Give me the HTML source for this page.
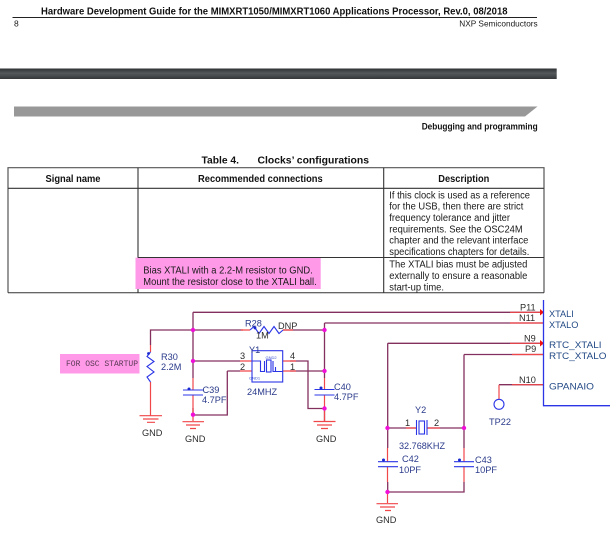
<!DOCTYPE html>
<html><head><meta charset="utf-8"><style>
html,body{margin:0;padding:0;background:#fff;width:610px;height:540px;overflow:hidden}
svg{display:block;filter:blur(.35px)}
text{font-family:"Liberation Sans",sans-serif;font-size:10px;fill:#1a1a1a}
.b{font-weight:bold;fill:#111}
.s text{font-size:9.2px;fill:#2c2c2c}
.s text.bl{fill:#2a3a8a}
.s text.nb{fill:#234a86}
.w{stroke:#84305f;stroke-width:1.3;fill:none}
.r{stroke:#f0474a;stroke-width:1.2;fill:none}
.c{stroke:#2b35e6;stroke-width:1.1;fill:none}
.d{fill:#f010d8}
.k{fill:#1a2ad0}
</style></head><body>
<svg width="610" height="540" viewBox="0 0 610 540" xmlns="http://www.w3.org/2000/svg">
<defs><linearGradient id="g" x1="0" y1="0" x2="0" y2="1"><stop offset="0" stop-color="#2e3234"/><stop offset=".45" stop-color="#54585a"/><stop offset="1" stop-color="#34383a"/></linearGradient></defs>
<rect width="610" height="540" fill="#fff"/>
<text x="41" y="14.5" class="b" textLength="466.5" lengthAdjust="spacingAndGlyphs">Hardware Development Guide for the MIMXRT1050/MIMXRT1060 Applications Processor, Rev.0, 08/2018</text>
<rect x="12.5" y="17" width="524.5" height="1" fill="#222"/>
<text x="14" y="26.5" style="font-size:8.5px">8</text>
<text x="459.3" y="26.5" style="font-size:8.5px" textLength="78.4" lengthAdjust="spacingAndGlyphs">NXP Semiconductors</text>
<rect x="0" y="68.5" width="556.7" height="10.5" fill="url(#g)"/>
<polygon points="14,106.5 537.5,106.5 525,116.5 14,116.5" fill="#989898"/>
<text x="421.7" y="129.5" class="b" style="font-size:9px" textLength="116" lengthAdjust="spacingAndGlyphs">Debugging and programming</text>

<text x="201.5" y="163.5" class="b" style="font-size:10.5px" textLength="37.5" lengthAdjust="spacingAndGlyphs">Table 4.</text>
<text x="257.5" y="163.5" class="b" style="font-size:10.5px" textLength="111.5" lengthAdjust="spacingAndGlyphs">Clocks’ configurations</text>

<g stroke="#333" fill="none" stroke-width="1">
<path d="M8 292.7V167.7H544V292.7" stroke="#555" stroke-width="1.2"/>
<path d="M8 188.3H544M138 167.7V293M383.7 167.7V293" stroke-width="1.1"/>
</g>
<rect x="135.5" y="257.7" width="185.2" height="31.3" fill="#ff99e8"/>
<g stroke="#333" fill="none" stroke-width="1">
<path d="M138 257.5H544M8 292.7H544" />
</g>
<text x="45.5" y="182" class="b" textLength="55" lengthAdjust="spacingAndGlyphs">Signal name</text>
<text x="198" y="182" class="b" textLength="124.7" lengthAdjust="spacingAndGlyphs">Recommended connections</text>
<text x="438.3" y="182" class="b" textLength="51" lengthAdjust="spacingAndGlyphs">Description</text>
<text x="389.3" y="198.3" textLength="140.7" lengthAdjust="spacingAndGlyphs">If this clock is used as a reference</text>
<text x="389.3" y="209.7" textLength="134" lengthAdjust="spacingAndGlyphs">for the USB, then there are strict</text>
<text x="389.3" y="221" textLength="120.7" lengthAdjust="spacingAndGlyphs">frequency tolerance and jitter</text>
<text x="389.3" y="232.4" textLength="133.4" lengthAdjust="spacingAndGlyphs">requirements. See the OSC24M</text>
<text x="389.3" y="243.7" textLength="139" lengthAdjust="spacingAndGlyphs">chapter and the relevant interface</text>
<text x="389.3" y="255" textLength="140" lengthAdjust="spacingAndGlyphs">specifications chapters for details.</text>
<text x="389.3" y="267.5" textLength="138" lengthAdjust="spacingAndGlyphs">The XTALI bias must be adjusted</text>
<text x="389.3" y="279" textLength="138" lengthAdjust="spacingAndGlyphs">externally to ensure a reasonable</text>
<text x="389.3" y="290.3" textLength="54.7" lengthAdjust="spacingAndGlyphs">start-up time.</text>
<text x="143.3" y="273.5" textLength="169.4" lengthAdjust="spacingAndGlyphs">Bias XTALI with a 2.2-M resistor to GND.</text>
<text x="143.3" y="285" textLength="173.4" lengthAdjust="spacingAndGlyphs">Mount the resistor close to the XTALI ball.</text>

<g class="s">
<rect x="60" y="354" width="79.5" height="19.5" fill="#ff99e8"/>
<text x="66" y="366" style="font-family:'Liberation Mono',monospace;font-size:8px;fill:#5a3a56" textLength="72" lengthAdjust="spacingAndGlyphs">FOR OSC STARTUP</text>

<!-- purple wires -->
<path class="w" d="M150.5 345V330H243M283 330H324.5M193 312.3H540M193 312.3V378M193 408V414.7M193 361H240M227.3 371H240M227.3 371V415H193M290 361H308V408.5H324.5M290 371H324.5M324.5 323V378M324.5 407V421M324.5 323H543M387.7 343.3H540M387.7 343.3V448M387.7 482V492H464V482M464 448V354.5M464 354.5H543M499 384.7H543M387.5 428H416M427 428H464"/>
<!-- red segments -->
<path class="r" d="M150.5 345V352M150.5 382V416M193 378V390M193 395V421M324.5 378V389.5M324.5 395V421M240 361H252M240 371H252M283 361H296M283 371H296M241 330H250M283 330H293M510 312.3H540M510 323H543M510 343.3H540M512 354.5H543M512 384.7H543M499 384.7V399M406 428H416M427 428H440M387.5 448V461.7M387.5 466.7V482M464 448V461.7M464 466.7V482M387.5 492V503"/>
<polygon points="540,309 544,312.3 540,315.5" fill="#f01010"/>
<polygon points="540,340 544,343.3 540,346.5" fill="#f01010"/>
<!-- GND symbols -->
<path class="r" d="M139.5 415.7H162M143 419H158.5M147 422.3H155"/>
<path class="r" d="M182.5 421.7H204M186 425H200M190 428.5H196"/>
<path class="r" d="M313.5 421.5H335.5M317 425H332M321 428.5H328"/>
<path class="r" d="M376.5 503.7H398M380 507H395M385 510.5H391"/>
<!-- R30 -->
<path class="c" d="M150.5 352L147 356.5L154 361.5L147 366.5L154 372L147 377L150.5 382"/>
<circle class="k" cx="148.5" cy="353.5" r="1.4"/>
<!-- R28 -->
<path class="c" d="M250 330L254 326.5L259 333.5L264 326.5L269 333.5L274 326.5L279 333.5L283 330"/>
<circle class="k" cx="255" cy="328" r="1.4"/>
<!-- caps -->
<path class="c" d="M183 390H203M183 395H203M314.5 389.5H334.5M314.5 395H334.5M378 461.7H398M378 466.7H398M454 461.7H474M454 466.7H474"/>
<g class="k"><circle cx="189" cy="389" r="1.5"/><circle cx="321" cy="388" r="1.5"/><circle cx="383.5" cy="460" r="1.5"/><circle cx="459.5" cy="460" r="1.5"/></g>
<!-- Y1 -->
<rect class="c" x="252" y="350.7" width="30.7" height="31.3"/>
<path class="c" d="M252 361H260.5V371.5H264.5M264.5 361V372M273 361V372M273 371.5H275.5V367M275.5 371.5H282.7"/>
<rect class="c" x="266.5" y="360" width="4.5" height="12"/>
<!-- Y2 -->
<path class="c" d="M416.5 420V435M427 420V435"/>
<rect class="c" x="419" y="421" width="5.5" height="13"/>
<!-- block + TP -->
<path d="M543.5 300V405.7H610" fill="none" stroke="#2b35e6" stroke-width="1.3"/>
<circle class="c" cx="499" cy="404.3" r="5"/>
<!-- dots -->
<g class="d">
<circle cx="193" cy="330" r="2.2"/><circle cx="193" cy="361" r="2.2"/><circle cx="193" cy="414.7" r="2.2"/>
<circle cx="324.5" cy="330" r="2.2"/><circle cx="324.5" cy="371" r="2.2"/><circle cx="324.5" cy="408.5" r="2.2"/>
<circle cx="387.5" cy="428" r="2.2"/><circle cx="464" cy="428" r="2.2"/><circle cx="387.5" cy="492" r="2.2"/>
</g>
<!-- labels -->
<text x="161" y="360" class="bl">R30</text><text x="161" y="370" class="bl">2.2M</text>
<text x="142" y="436">GND</text><text x="185" y="442">GND</text><text x="316" y="442">GND</text><text x="376" y="523">GND</text>
<text x="245" y="326.5" class="bl">R28</text><text x="278" y="329">DNP</text><text x="256" y="338.5">1M</text>
<text x="202.5" y="393" class="bl">C39</text><text x="202" y="403" class="bl">4.7PF</text>
<text x="334" y="390" class="bl">C40</text><text x="334" y="400" class="bl">4.7PF</text>
<text x="249" y="353" class="bl">Y1</text>
<text x="240" y="359">3</text><text x="240" y="370">2</text><text x="290" y="359">4</text><text x="290" y="370">1</text>
<text x="265.5" y="359" style="font-size:4px;fill:#3a50d0">GND2</text>
<text x="249" y="379.5" style="font-size:4px;fill:#3a50d0">GND1</text>
<text x="247" y="395" class="bl">24MHZ</text>
<text x="520" y="310.5">P11</text><text x="519" y="321">N11</text><text x="524" y="341.5">N9</text><text x="525" y="352">P9</text><text x="519" y="383">N10</text>
<text x="549" y="317" class="nb">XTALI</text><text x="549" y="328" class="nb">XTALO</text>
<text x="549" y="348" class="nb" textLength="52.5" lengthAdjust="spacingAndGlyphs">RTC_XTALI</text>
<text x="549" y="359" class="nb" textLength="57.5" lengthAdjust="spacingAndGlyphs">RTC_XTALO</text>
<text x="549" y="389.5" class="nb" textLength="45" lengthAdjust="spacingAndGlyphs">GPANAIO</text>
<text x="489" y="425" class="bl">TP22</text>
<text x="415" y="413" class="bl">Y2</text><text x="405" y="426">1</text><text x="434" y="426">2</text>
<text x="399" y="449" class="bl" textLength="46" lengthAdjust="spacingAndGlyphs">32.768KHZ</text>
<text x="402" y="462" class="bl">C42</text><text x="399" y="473" class="bl">10PF</text>
<text x="475" y="463" class="bl">C43</text><text x="475" y="473" class="bl">10PF</text>
</g>
</svg>
</body></html>
